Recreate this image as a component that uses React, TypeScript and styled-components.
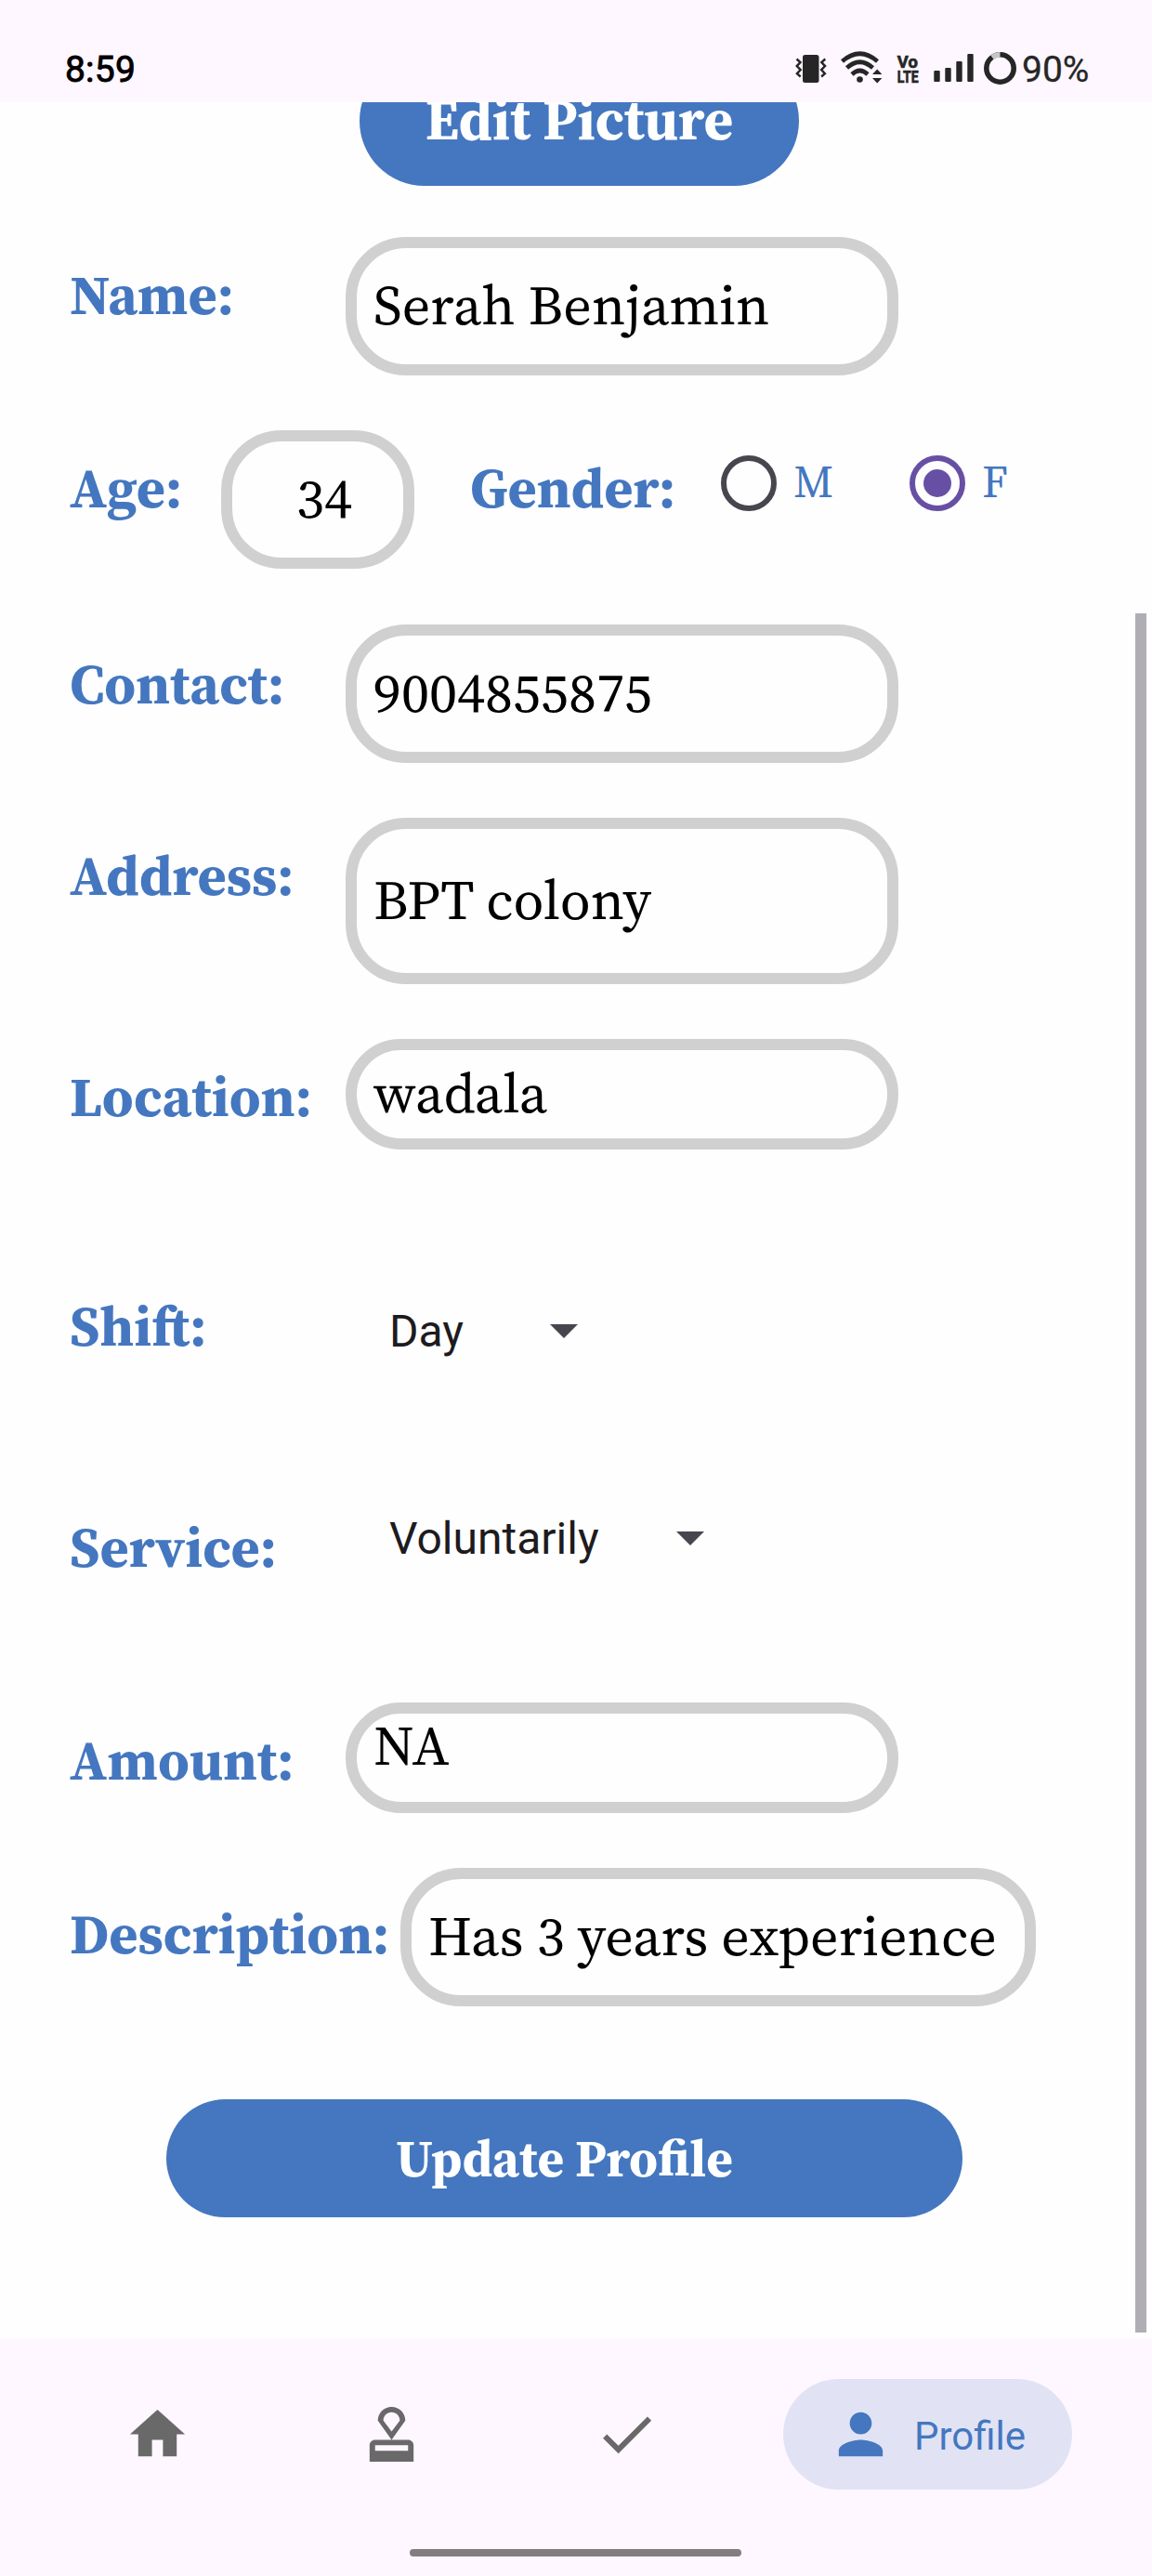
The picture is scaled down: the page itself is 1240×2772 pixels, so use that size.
import React from 'react';
import styled, { createGlobalStyle } from 'styled-components';

const SERIF = '"Source Serif 4", "Source Serif Pro", "Noto Serif CJK SC", "Noto Serif CJK JP", "Liberation Serif", serif';
const BLUE = '#4477bf';
const SURFACE = '#fef7ff';

const GlobalStyle = createGlobalStyle`
  * { box-sizing: border-box; }
  body { margin: 0; background: #fefefe; font-family: Roboto, sans-serif; }
`;

const Screen = styled.div`
  width: 1240px;
  height: 2772px;
  display: flex;
  flex-direction: column;
  overflow: hidden;
  background: #fefefe;
`;

const StatusBar = styled.header`
  height: 110px;
  flex: none;
  display: flex;
  justify-content: space-between;
  padding: 52px 67px 0 70px;
  background: ${SURFACE};
  color: #000;
`;

const Clock = styled.span`
  font-size: 39px;
  line-height: 46px;
  letter-spacing: 0.2px;
  -webkit-text-stroke: 0.9px #000;
`;

const StatusIcons = styled.div`
  display: flex;
  color: #262626;
`;

const Battery = styled.span`
  width: 73px;
  font-size: 39px;
  line-height: 46px;
  white-space: nowrap;
  -webkit-text-stroke: 0.3px #262626;
`;

const Body = styled.div`
  flex: 1;
  min-height: 0;
  display: flex;
  overflow: hidden;
`;

const Form = styled.main`
  flex: 1;
  min-width: 0;
  display: flex;
  flex-direction: column;
  font-family: ${SERIF};
`;

const ScrollTrack = styled.div`
  width: 18px;
  padding-top: 550px;
`;

const ScrollThumb = styled.div`
  width: 12px;
  height: 1850px;
  background: #b0aeb4;
`;

const EditButton = styled.button`
  flex: none;
  width: 473px;
  height: 140px;
  margin: -50px 0 0 387px;
  padding: 0 0 2px;
  border: 0;
  border-radius: 70px;
  background: ${BLUE};
  color: #fff;
  font: bold 61px/120px ${SERIF};
  white-space: nowrap;
`;

const Row = styled.div<{ $top: number; $h: number }>`
  flex: none;
  display: flex;
  align-items: flex-start;
  margin-top: ${(p) => p.$top}px;
  height: ${(p) => p.$h}px;
  padding-left: 75px;
`;

const Label = styled.label<{ $w: number; $y?: number; $indent?: number }>`
  flex: none;
  width: ${(p) => p.$w}px;
  padding: ${(p) => p.$y ?? 20}px 0 0 ${(p) => p.$indent ?? 0}px;
  font-weight: bold;
  font-size: 60px;
  line-height: 84px;
  color: ${BLUE};
  white-space: nowrap;
`;

const Field = styled.div<{ $w: number; $y: number; $x?: number }>`
  flex: none;
  width: ${(p) => p.$w}px;
  height: 100%;
  padding: ${(p) => p.$y}px 0 0 ${(p) => p.$x ?? 18}px;
  border: 12px solid #d0d0d0;
  border-radius: 65px;
  font-size: 60px;
  line-height: 60px;
  color: #000;
  white-space: nowrap;
`;

const Radio = styled.span<{ $on?: boolean }>`
  flex: none;
  width: 60px;
  height: 60px;
  margin-top: 27px;
  border: 6px solid ${(p) => (p.$on ? '#6750a4' : '#49454f')};
  border-radius: 50%;
  display: flex;
  align-items: center;
  justify-content: center;

  &::after {
    content: '';
    width: 30px;
    height: 30px;
    border-radius: 50%;
    background: ${(p) => (p.$on ? '#6750a4' : 'transparent')};
  }
`;

const RadioText = styled.span<{ $w: number }>`
  flex: none;
  width: ${(p) => p.$w}px;
  padding: 25px 0 0 18px;
  font-size: 48px;
  line-height: 60px;
  color: ${BLUE};
`;

const Select = styled.div<{ $w: number; $y: number }>`
  width: ${(p) => p.$w}px;
  margin-top: ${(p) => p.$y}px;
  display: flex;
  align-items: center;
  justify-content: space-between;
  font-family: Roboto, sans-serif;
  font-size: 48px;
  line-height: 60px;
  color: #1d1b20;
`;

const Caret = styled.span`
  width: 0;
  height: 0;
  margin-bottom: 2px;
  border: 15px solid transparent;
  border-top-color: #49454f;
  border-bottom: 0;
`;

const UpdateButton = styled.button`
  flex: none;
  width: 857px;
  height: 127px;
  margin: 100px 0 0 179px;
  padding: 0;
  border: 0;
  border-radius: 64px;
  background: ${BLUE};
  color: #fff;
  font: bold 55px/118px ${SERIF};
`;

const Nav = styled.nav`
  flex: none;
  height: 256px;
  display: flex;
  flex-direction: column;
  background: ${SURFACE};
`;

const Tabs = styled.div`
  flex: 1;
  display: flex;
  align-items: flex-start;
  padding: 44px 0 0 43px;
`;

const Tab = styled.a`
  width: 252.5px;
  height: 119px;
  display: flex;
  align-items: center;
  justify-content: center;
  color: #696969;
`;

const ActiveTab = styled.a`
  width: 311px;
  height: 119px;
  margin-left: 42.5px;
  padding-left: 48px;
  display: flex;
  align-items: center;
  gap: 22px;
  border-radius: 60px;
  background: #e1e3f4;
  color: ${BLUE};
  font-size: 42px;
`;

const TabText = styled.span`
  padding-top: 3px;
`;

const HomeIndicator = styled.div`
  width: 357px;
  height: 8px;
  margin: 0 0 21px 441px;
  border-radius: 4px;
  background: #837d82;
`;

const Icon = ({ d }: { d: string }) => (
  <svg width="71" height="71" viewBox="0 0 24 24" fill="currentColor" fillRule="evenodd">
    <path d={d} />
  </svg>
);

const StatusGlyphs = () => (
  <svg width="245" height="50" viewBox="856 52 245 50" fill="none" stroke="#262626">
    <rect x="865" y="59" width="17.5" height="30" rx="2.5" fill="#262626" stroke="none" />
    <path d="M858.5 63.5l4 3.6-3.8 4 4 4-3.8 4 3.8 3.4M889.3 63.5l-4 3.6 3.8 4-4 4 3.8 4-3.8 3.4" strokeWidth="2.4" />
    <path d="M907.5 66Q926.5 49.5 945.5 66M912.5 73Q926.5 60.5 940.5 73M918 80Q926.5 72 935 80" strokeWidth="4.6" />
    <circle cx="926.5" cy="85.5" r="3.3" fill="#262626" stroke="none" />
    <path d="M940 80l5.2-5.5 5.2 5.5zM940 84l5.2 5.5 5.2-5.5z" fill="#262626" stroke="none" />
    <g fill="#262626" strokeWidth="0.7" fontFamily="Roboto, sans-serif" fontWeight="700" fontSize="19">
      <text x="966.8" y="72.8" textLength="22" lengthAdjust="spacingAndGlyphs">Vo</text>
      <text x="966.8" y="88.8" textLength="22.8" lengthAdjust="spacingAndGlyphs">LTE</text>
    </g>
    <g fill="#262626" stroke="none">
      <rect x="1006.3" y="76" width="6.4" height="12" rx="1" />
      <rect x="1018.3" y="73" width="6.4" height="15" rx="1" />
      <rect x="1030.3" y="66" width="6.4" height="22" rx="1" />
      <rect x="1042.3" y="58" width="6.4" height="30" rx="1" />
    </g>
    <circle cx="1077.5" cy="73.5" r="14.7" strokeWidth="5.6" />
    <path d="M1068.9 61.6A14.7 14.7 0 0 1 1077.5 58.8" stroke="#c9c4ca" strokeWidth="5.8" />
  </svg>
);

const HOME = 'M10 20v-6h4v6h5v-8h3L12 3 2 12h3v8z';
const STAMP =
  'M4 16v6h16v-6c0-1.1-.9-2-2-2H6c-1.1 0-2 .9-2 2zm14 2H6v-2h12zM12 2C9.24 2 7 4.24 7 7l5 7 5-7c0-2.76-2.24-5-5-5zm0 9L9 7c0-1.66 1.34-3 3-3s3 1.34 3 3z';
const CHECK = 'M9 16.17 4.83 12l-1.42 1.41L9 19 21 7l-1.41-1.41z';
const PERSON =
  'M12 12c2.21 0 4-1.79 4-4s-1.79-4-4-4-4 1.79-4 4 1.79 4 4 4zm0 2c-2.67 0-8 1.34-8 4v2h16v-2c0-2.66-5.33-4-8-4z';

export default function App() {
  return (
    <>
      <GlobalStyle />
      <Screen>
        <StatusBar>
          <Clock>8:59</Clock>
          <StatusIcons>
            <StatusGlyphs />
            <Battery>90%</Battery>
          </StatusIcons>
        </StatusBar>
        <Body>
          <Form>
            <EditButton>Edit Picture</EditButton>
            <Row $top={55} $h={149}>
              <Label $w={297}>Name:</Label>
              <Field $w={595} $y={31}>Serah Benjamin</Field>
            </Row>
            <Row $top={59} $h={149}>
              <Label $w={163}>Age:</Label>
              <Field $w={208} $y={31} $x={69}>34</Field>
              <Label $w={330} $indent={60}>Gender:</Label>
              <Radio />
              <RadioText $w={143}>M</RadioText>
              <Radio $on />
              <RadioText $w={70}>F</RadioText>
            </Row>
            <Row $top={60} $h={149}>
              <Label $w={297} $y={22}>Contact:</Label>
              <Field $w={595} $y={31}>9004855875</Field>
            </Row>
            <Row $top={59} $h={179}>
              <Label $w={297}>Address:</Label>
              <Field $w={595} $y={46}>BPT colony</Field>
            </Row>
            <Row $top={59} $h={119}>
              <Label $w={297}>Location:</Label>
              <Field $w={595} $y={16}>wadala</Field>
            </Row>
            <Row $top={128} $h={119}>
              <Label $w={344}>Shift:</Label>
              <Select $w={203} $y={38}>Day<Caret /></Select>
            </Row>
            <Row $top={119} $h={119}>
              <Label $w={344}>Service:</Label>
              <Select $w={339} $y={23}>Voluntarily<Caret /></Select>
            </Row>
            <Row $top={110} $h={119}>
              <Label $w={297}>Amount:</Label>
              <Field $w={595} $y={4}>NA</Field>
            </Row>
            <Row $top={59} $h={149}>
              <Label $w={356} $y={29}>Description:</Label>
              <Field $w={684} $y={31}>Has 3 years experience</Field>
            </Row>
            <UpdateButton>Update Profile</UpdateButton>
          </Form>
          <ScrollTrack>
            <ScrollThumb />
          </ScrollTrack>
        </Body>
        <Nav>
          <Tabs>
            <Tab><Icon d={HOME} /></Tab>
            <Tab><Icon d={STAMP} /></Tab>
            <Tab><Icon d={CHECK} /></Tab>
            <ActiveTab><Icon d={PERSON} /><TabText>Profile</TabText></ActiveTab>
          </Tabs>
          <HomeIndicator />
        </Nav>
      </Screen>
    </>
  );
}
